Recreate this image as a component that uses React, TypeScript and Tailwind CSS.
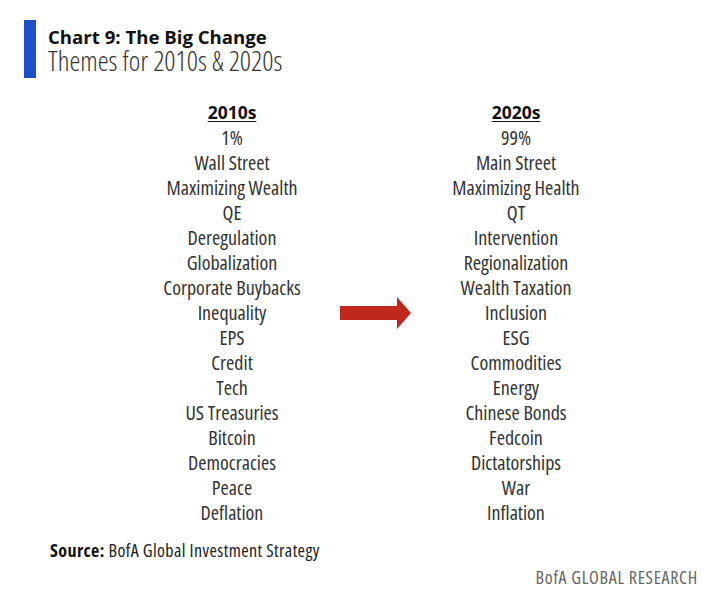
const left = [
  "1%",
  "Wall Street",
  "Maximizing Wealth",
  "QE",
  "Deregulation",
  "Globalization",
  "Corporate Buybacks",
  "Inequality",
  "EPS",
  "Credit",
  "Tech",
  "US Treasuries",
  "Bitcoin",
  "Democracies",
  "Peace",
  "Deflation",
];

const right = [
  "99%",
  "Main Street",
  "Maximizing Health",
  "QT",
  "Intervention",
  "Regionalization",
  "Wealth Taxation",
  "Inclusion",
  "ESG",
  "Commodities",
  "Energy",
  "Chinese Bonds",
  "Fedcoin",
  "Dictatorships",
  "War",
  "Inflation",
];

function Column({ title, items }: { title: string; items: string[] }) {
  return (
    <div className="flex flex-col items-center">
      <div className="h-[25px] text-[17.5px] font-bold leading-[25px] text-[#111] underline underline-offset-2 font-stretch-[88%]">
        {title}
      </div>
      {items.map((t) => (
        <div key={t} className="h-[25px] text-[20px] leading-[25px] text-[#333] whitespace-nowrap font-stretch-condensed">
          {t}
        </div>
      ))}
    </div>
  );
}

export default function App() {
  return (
    <div className="h-[599px] w-[720px] bg-white font-['Open_Sans','Liberation_Sans',sans-serif]">
      {/* Header */}
      <div className="flex gap-3 pl-[24px] pt-[20px]">
        <div className="h-[58px] w-[12px] bg-[#1f4fc8]" />
        <div className="flex flex-col">
          <h1 className="mt-[7px] text-[18.6px] font-bold leading-[19px] text-[#111] font-stretch-[90%]">
            Chart 9: The Big Change
          </h1>
          <p className="mt-[1px] text-[27.5px] font-light leading-[28px] text-[#333] font-stretch-condensed">
            Themes for 2010s &amp; 2020s
          </p>
        </div>
      </div>

      {/* Columns */}
      <div className="mt-[22px] grid grid-cols-[180px_108px_172px] pl-[142px]">
        <Column title="2010s" items={left} />
        <div className="flex flex-col">
          <div className="h-[200px]" />
          <div className="flex h-[25px] items-center justify-center">
            <svg width="72" height="32" viewBox="0 0 72 32">
              <path d="M0 9 H57 V0 L71 16 L57 32 V23 H0 Z" fill="#c0281c" />
            </svg>
          </div>
        </div>
        <Column title="2020s" items={right} />
      </div>

      {/* Footer */}
      <div className="mt-[12px] pl-[50px] text-[18px] tracking-[0.4px] text-[#222] font-stretch-condensed">
        <span className="font-bold text-[#111]">Source:</span> BofA Global Investment Strategy
      </div>
      <div className="pr-[22px] text-right text-[18px] tracking-[0.7px] text-[#666] font-stretch-condensed">
        BofA GLOBAL RESEARCH
      </div>
    </div>
  );
}
